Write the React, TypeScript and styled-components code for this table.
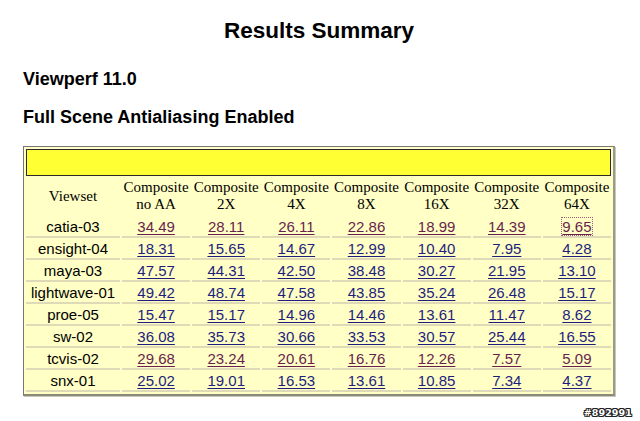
import React from "react";
import styled, { createGlobalStyle } from "styled-components";

const Global = createGlobalStyle`
  html, body { margin: 0; padding: 0; background: #ffffff; }
  body { font-family: "Liberation Sans", Arial, sans-serif; color: #000; }
`;

const Page = styled.div`
  width: 640px;
  height: 421px;
  position: relative;
  overflow: hidden;
  padding: 18px 25px 0 23px;
  box-sizing: border-box;
`;

const Title = styled.h1`
  margin: 0;
  text-align: center;
  font-size: 22.5px;
  line-height: 26px;
  font-weight: bold;
`;

const SubHead = styled.h2<{ $gap: number }>`
  margin: ${(p) => p.$gap}px 0 0 0;
  font-size: 18px;
  line-height: 20px;
  font-weight: bold;
`;

const Table = styled.table`
  margin-top: 19px;
  width: 592px;
  table-layout: fixed;
  border-collapse: separate;
  border-spacing: 2px;
  background: #ffffc6;
  border-top: 1px solid #777;
  border-left: 1px solid #777;
  border-right: 2px solid #9a9a88;
  border-bottom: 2px solid #8a8a7a;
  box-shadow: 1px 1px 0 #c8c8b8;
`;

const BannerCell = styled.td`
  height: 25px;
  background: #ffff33;
  border: 1px solid #2a2a2a;
  padding: 0;
`;

const HeadCell = styled.th`
  font-family: "Liberation Serif", "Times New Roman", serif;
  font-weight: normal;
  font-size: 15px;
  line-height: 17px;
  text-align: center;
  vertical-align: middle;
  padding: 1px 0 3px;
  white-space: nowrap;
`;

const NameCell = styled.td`
  font-size: 15px;
  line-height: 18px;
  text-align: center;
  padding: 0;
  border-bottom: 2px solid #dedab8;
  white-space: nowrap;
`;

const ValueCell = styled(NameCell)``;

const Score = styled.a<{ $visited: boolean; $focus?: boolean }>`
  color: ${(p) => (p.$visited ? "#6a1f4e" : "#1e1e7e")};
  text-decoration: underline;
  text-underline-offset: 2px;
  cursor: pointer;
  outline: ${(p) => (p.$focus ? "1px dotted #9a5a7a" : "none")};
`;

const Watermark = styled.div`
  position: absolute;
  right: 8px;
  bottom: 3px;
  font-family: "DejaVu Sans", sans-serif;
  font-weight: bold;
  font-size: 9.5px;
  letter-spacing: 0.1px;
  color: #ffffff;
  text-shadow: 1px 0 0 #222, -1px 0 0 #222, 0 1px 0 #222, 0 -1px 0 #222,
    1px 1px 0 #222, -1px -1px 0 #222, 1px -1px 0 #222, -1px 1px 0 #222;
`;

const headers = ["no AA", "2X", "4X", "8X", "16X", "32X", "64X"];

const rows: { name: string; visited: boolean; values: string[] }[] = [
  { name: "catia-03", visited: true, values: ["34.49", "28.11", "26.11", "22.86", "18.99", "14.39", "9.65"] },
  { name: "ensight-04", visited: false, values: ["18.31", "15.65", "14.67", "12.99", "10.40", "7.95", "4.28"] },
  { name: "maya-03", visited: false, values: ["47.57", "44.31", "42.50", "38.48", "30.27", "21.95", "13.10"] },
  { name: "lightwave-01", visited: false, values: ["49.42", "48.74", "47.58", "43.85", "35.24", "26.48", "15.17"] },
  { name: "proe-05", visited: false, values: ["15.47", "15.17", "14.96", "14.46", "13.61", "11.47", "8.62"] },
  { name: "sw-02", visited: false, values: ["36.08", "35.73", "30.66", "33.53", "30.57", "25.44", "16.55"] },
  { name: "tcvis-02", visited: true, values: ["29.68", "23.24", "20.61", "16.76", "12.26", "7.57", "5.09"] },
  { name: "snx-01", visited: false, values: ["25.02", "19.01", "16.53", "13.61", "10.85", "7.34", "4.37"] },
];

export default function App() {
  return (
    <>
      <Global />
      <Page>
        <Title>Results Summary</Title>
        <SubHead $gap={25}>Viewperf 11.0</SubHead>
        <SubHead $gap={18}>Full Scene Antialiasing Enabled</SubHead>
        <Table>
          <colgroup>
            <col style={{ width: 94 }} />
            {headers.map((h) => (
              <col key={h} />
            ))}
          </colgroup>
          <tbody>
            <tr>
              <BannerCell colSpan={8} />
            </tr>
            <tr>
              <HeadCell>Viewset</HeadCell>
              {headers.map((h) => (
                <HeadCell key={h}>
                  Composite
                  <br />
                  {h}
                </HeadCell>
              ))}
            </tr>
            {rows.map((r) => (
              <tr key={r.name}>
                <NameCell>{r.name}</NameCell>
                {r.values.map((v, i) => (
                  <ValueCell key={i}>
                    <Score $visited={r.visited} $focus={r.name === "catia-03" && i === 6}>
                      {v}
                    </Score>
                  </ValueCell>
                ))}
              </tr>
            ))}
          </tbody>
        </Table>
        <Watermark>#892991</Watermark>
      </Page>
    </>
  );
}
